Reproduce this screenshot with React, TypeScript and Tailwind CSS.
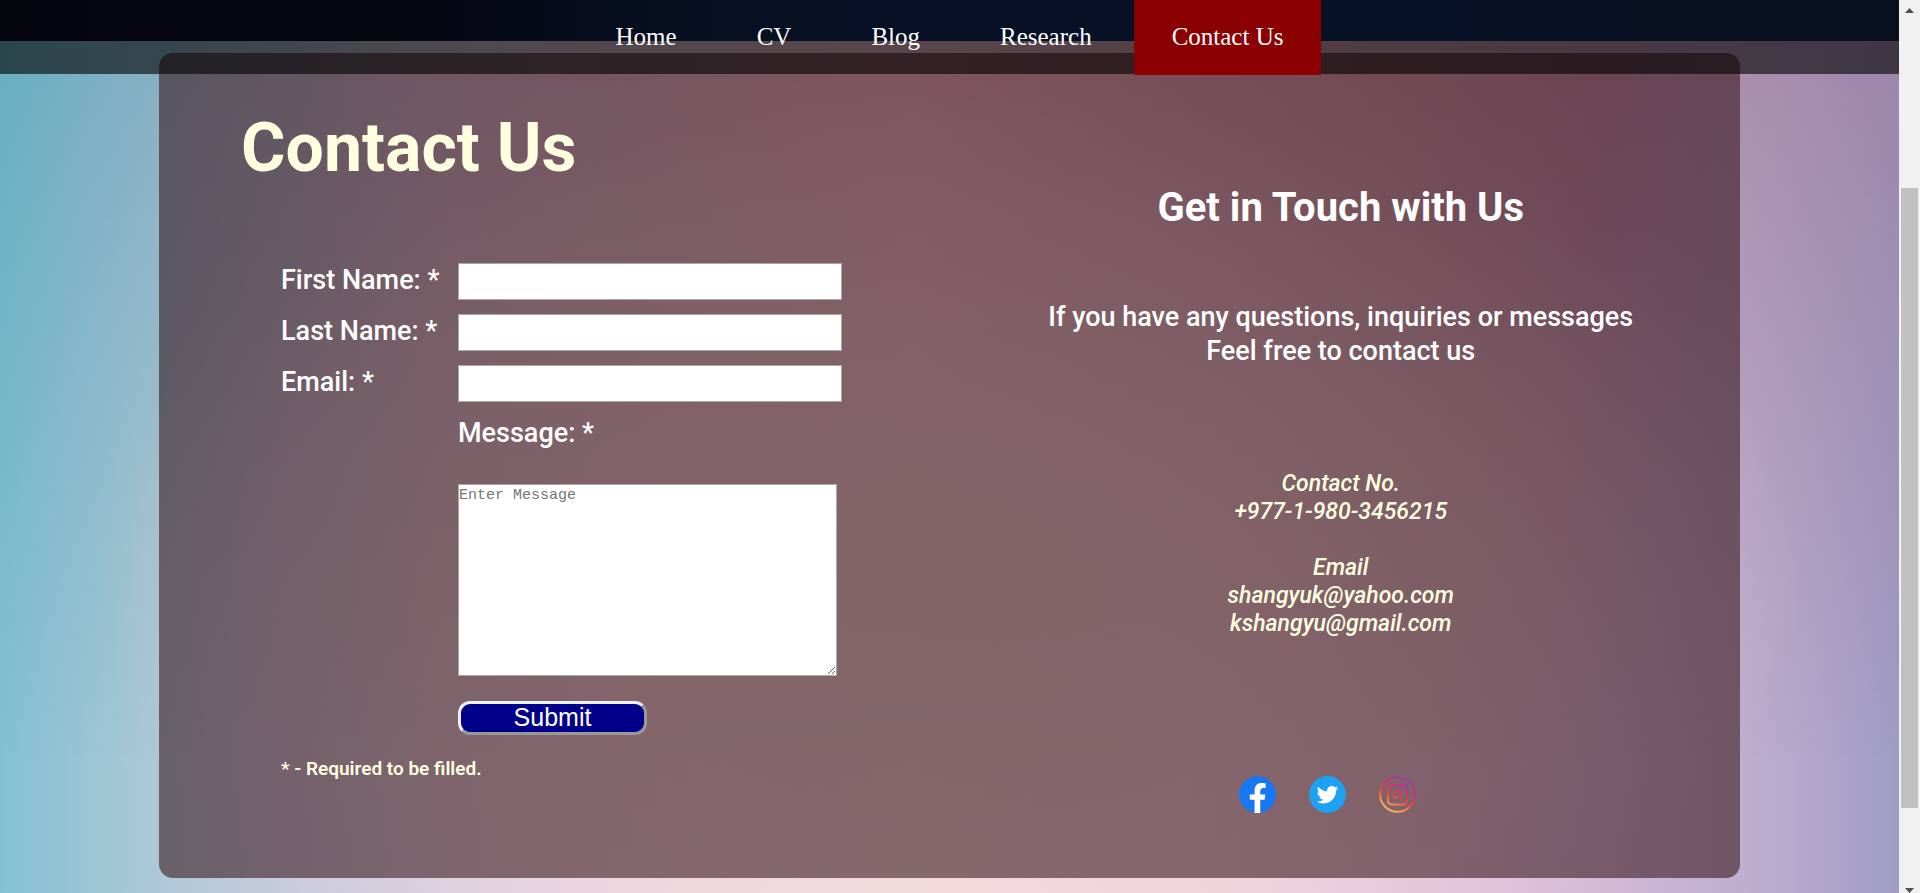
import React from "react";

const navItems = ["Home", "CV", "Blog", "Research", "Contact Us"];

const fields = [
  { id: "first-name", label: "First Name: *", type: "text" },
  { id: "last-name", label: "Last Name: *", type: "text" },
  { id: "email", label: "Email: *", type: "email" },
];

function FacebookIcon() {
  return (
    <svg viewBox="0 0 24 24" className="size-[37px]" aria-hidden="true">
      <circle cx="12" cy="12" r="12" fill="#1877f2" />
      <path
        fill="#fff"
        d="M10.1 24v-8.600H7V12h3.100V9.400c0-3.200 1.900-4.800 4.600-4.800 1.300 0 2.600.2 2.600.2v3h-1.500c-1.500 0-2 .9-2 1.900V12h3.300l-.5 3.400h-2.800V24z"
      />
    </svg>
  );
}

function TwitterIcon() {
  return (
    <svg viewBox="0 0 24 24" className="size-[37px]" aria-hidden="true">
      <circle cx="12" cy="12" r="12" fill="#1da1f2" />
      <g transform="translate(5 5.1) scale(.585)">
        <path
          fill="#fff"
          d="M23.953 4.57a10 10 0 01-2.825.775 4.958 4.958 0 002.163-2.723c-.951.555-2.005.959-3.127 1.184a4.92 4.92 0 00-8.384 4.482C7.69 8.095 4.067 6.13 1.64 3.162a4.822 4.822 0 00-.666 2.475c0 1.71.87 3.213 2.188 4.096a4.904 4.904 0 01-2.228-.616v.06a4.923 4.923 0 003.946 4.827 4.996 4.996 0 01-2.212.085 4.936 4.936 0 004.604 3.417 9.867 9.867 0 01-6.102 2.105c-.39 0-.779-.023-1.17-.067a13.995 13.995 0 007.557 2.209c9.053 0 13.998-7.496 13.998-13.985 0-.21 0-.42-.015-.63A9.935 9.935 0 0024 4.59z"
        />
      </g>
    </svg>
  );
}

function InstagramIcon() {
  return (
    <svg viewBox="0 0 38 38" className="size-[37px]" fill="none" aria-hidden="true">
      <defs>
        <linearGradient id="insta" x1="8" y1="38" x2="28" y2="0" gradientUnits="userSpaceOnUse">
          <stop offset="0" stopColor="#fdc760" />
          <stop offset=".25" stopColor="#f58a4b" />
          <stop offset=".45" stopColor="#e8443f" />
          <stop offset=".7" stopColor="#c62f86" />
          <stop offset="1" stopColor="#8a4aa8" />
        </linearGradient>
      </defs>
      <g stroke="url(#insta)" strokeWidth="2">
        <circle cx="19" cy="19" r="17.8" />
        <rect x="9.2" y="9.2" width="19.6" height="20" rx="3.5" />
        <circle cx="19" cy="19" r="3.8" />
      </g>
      <circle cx="24.4" cy="13.8" r="1.3" fill="#b93a90" />
    </svg>
  );
}

const socials = [
  { name: "Facebook", Icon: FacebookIcon },
  { name: "Twitter", Icon: TwitterIcon },
  { name: "Instagram", Icon: InstagramIcon },
];

function Backdrop() {
  return (
    <div className="absolute inset-0" aria-hidden="true">
      <div className="absolute inset-0 bg-[linear-gradient(90deg,#83c1d1_0%,#b0c9d8_9%,#c8cbdd_15%,#efd8e4_32%,#f9e2e2_48%,#f3d6e2_65%,#d9bdd9_82%,#beaed0_92%,#a09dc3_100%)]" />
      <div className="absolute inset-0 bg-[linear-gradient(90deg,#68afc0_0%,#86afc2_8%,#bfb4c6_22%,#e0b0bf_48%,#c699a8_70%,#b48ca4_84%,#a98fad_92%,#9d87ab_100%)] [mask-image:linear-gradient(180deg,#000_8%,transparent_85%)]" />
      <div className="absolute inset-0 bg-[radial-gradient(ellipse_45%_55%_at_50%_65%,#e8d0d0_0%,#e8d0d000_100%)]" />
      <div className="absolute inset-x-0 top-0 h-[41px] bg-[linear-gradient(90deg,#0a0c22_0%,#0a1028_20%,#122858_38%,#122c60_70%,#18284e_100%)]" />
    </div>
  );
}

function NavBar() {
  return (
    <nav className="relative z-10 flex h-[74px] justify-center gap-1 bg-black/60 font-['Liberation_Serif',serif] text-[25px] text-white">
      {navItems.map((item) => (
        <a
          key={item}
          href="#"
          className={
            item === "Contact Us"
              ? "flex h-[75px] items-center bg-[#8b0000] px-[38px] pb-0.5"
              : "flex h-[75px] items-center px-[38px] pb-0.5"
          }
        >
          {item}
        </a>
      ))}
    </nav>
  );
}

function ContactForm() {
  return (
    <form className="mt-[75px] pl-10" onSubmit={(e) => e.preventDefault()}>
      <div className="grid grid-cols-[177px_384px] gap-y-[14px] text-[27px] leading-[34px] font-medium text-white">
        {fields.map((f) => (
          <React.Fragment key={f.id}>
            <label htmlFor={f.id}>{f.label}</label>
            <input
              id={f.id}
              type={f.type}
              className="h-[37px] border border-[#a9a9a9] bg-white px-1 text-base font-normal text-black"
            />
          </React.Fragment>
        ))}
        <label htmlFor="message" className="col-start-2">
          Message: *
        </label>
      </div>
      <div className="mt-[34px] flex flex-col items-start pl-[177px]">
        <textarea
          id="message"
          placeholder="Enter Message"
          className="h-[192px] w-[379px] resize border border-[#a9a9a9] bg-white font-['Liberation_Mono',monospace] text-[15px] leading-[22px] text-black placeholder:text-[#757575]"
        />
        <button
          type="submit"
          className="mt-[25px] h-[34px] w-[189px] rounded-xl border-3 border-t-[#f0f0f0] border-r-[#999] border-b-[#999] border-l-[#f0f0f0] bg-[#00008b] pb-0.5 font-['Liberation_Sans',sans-serif] text-[25px] leading-[26px] text-white"
        >
          Submit
        </button>
      </div>
      <p className="mt-[22px] text-[19px] leading-6 font-semibold text-[#ffffe0]">* - Required to be filled.</p>
    </form>
  );
}

function ContactInfo() {
  return (
    <section className="flex flex-1 flex-col items-center pt-[131px] pr-2 text-center">
      <h2 className="text-[40px] leading-[48px] font-bold text-white">Get in Touch with Us</h2>
      <p className="mt-[68px] text-[27px] leading-[34px] font-medium text-white">
        If you have any questions, inquiries or messages
        <br />
        Feel free to contact us
      </p>
      <address className="mt-[102px] text-[23px] leading-7 font-medium text-[#ffffe0] italic">
        Contact No.
        <br />
        +977-1-980-3456215
        <br />
        <br />
        Email
        <br />
        shangyuk@yahoo.com
        <br />
        kshangyu@gmail.com
      </address>
      <div className="mt-[138px] flex gap-[33px] pr-[26px]">
        {socials.map(({ name, Icon }) => (
          <a key={name} href="#" aria-label={name}>
            <Icon />
          </a>
        ))}
      </div>
    </section>
  );
}

function ScrollBar() {
  return (
    <div className="flex w-[21px] flex-col items-center bg-[#f1f1f1]" aria-hidden="true">
      <svg viewBox="0 0 9 5" className="mt-2 h-[5px] w-[9px]" fill="#505050">
        <path d="M4.5 0 9 5H0z" />
      </svg>
      <div className="mt-[175px] h-[620px] w-[17px] bg-[#c1c1c1]" />
      <svg viewBox="0 0 9 5" className="mt-auto h-[5px] w-[9px]" fill="#505050">
        <path d="M0 0h9L4.5 5z" />
      </svg>
    </div>
  );
}

export default function App() {
  return (
    <div className="flex min-h-screen font-[Roboto,sans-serif]">
      <div className="relative flex-1">
        <Backdrop />
        <NavBar />
        <main className="relative mx-[159px] -mt-[21px] mb-[15px] flex rounded-[14px] bg-[#2d0b10]/55 pb-[65px]">
          <div className="w-1/2 pt-[55px] pl-[82px]">
            <h1 className="text-[68px] leading-20 font-bold text-[#ffffe0]">Contact Us</h1>
            <ContactForm />
          </div>
          <ContactInfo />
        </main>
      </div>
      <ScrollBar />
    </div>
  );
}
